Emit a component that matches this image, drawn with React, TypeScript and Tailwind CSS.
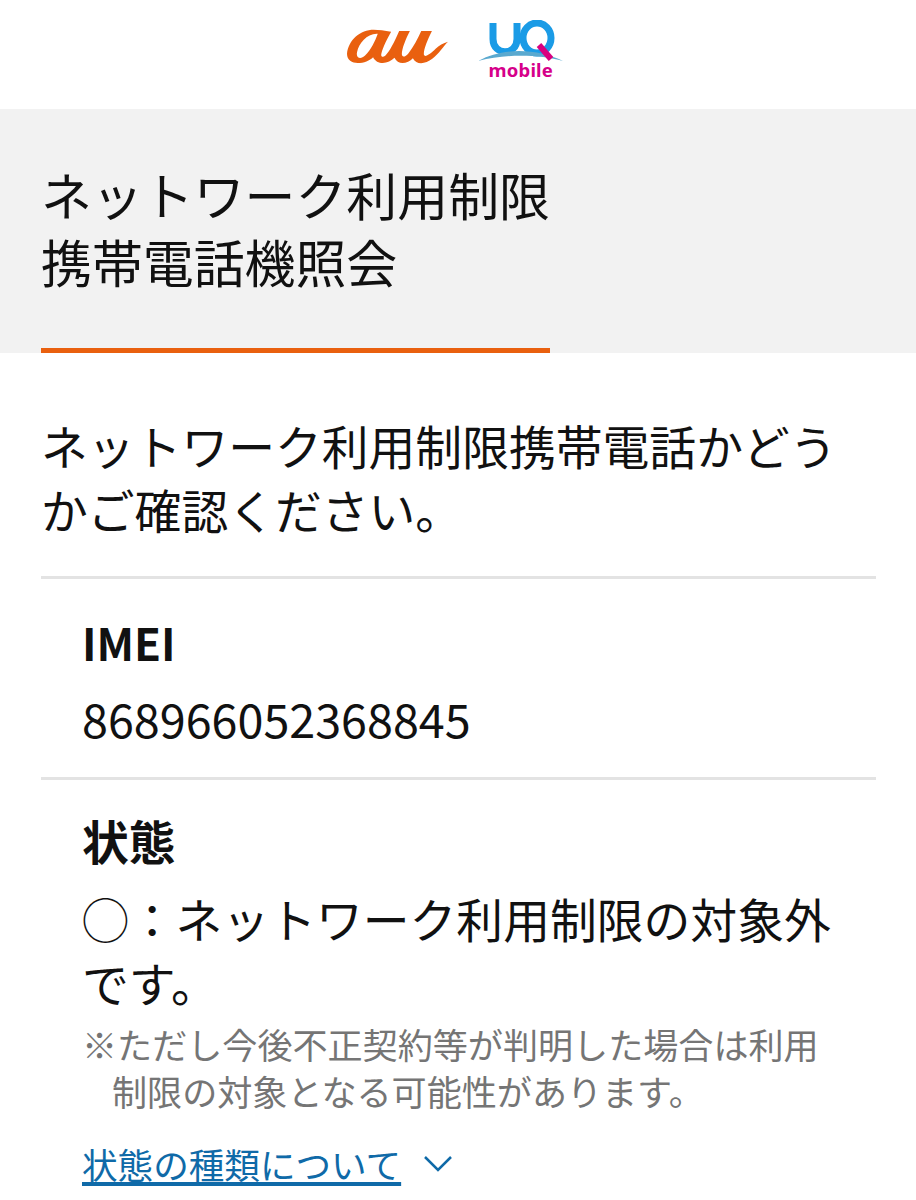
export default function App() {
  return (
    <div className="w-[916px] h-[1200px] overflow-hidden bg-white text-[#111111] font-['Noto_Sans_CJK_JP',sans-serif]">
      <header className="h-[109px] flex items-start justify-center gap-[30px] pt-[20px] pr-[5px]">
        <svg width="102" height="37" viewBox="80 86 305 110" className="mt-[9px]">
          <path
            fillRule="evenodd"
            fill="#e9600f"
            d="M80 160C84 118 120 88 160 88C175 88 192 90 212 94C200 115 188 140 183 158C180 170 187 172 195 165C206 155 222 125 236 92L268 92C256 115 244 145 244 160C244 172 254 170 264 158C278 140 292 115 302 92L334 92C320 120 308 150 310 163C313 172 330 160 345 145C355 135 368 128 382 124C370 135 355 160 335 175C315 190 288 195 277 173C262 190 232 195 222 172C205 190 170 195 158 170C140 190 80 200 80 160ZM172 100C140 98 116 128 110 155C106 174 122 177 134 165C152 148 164 122 172 100Z"
          />
        </svg>
        <div className="relative w-[86px] h-[62px]">
          <svg width="86" height="62" viewBox="0 0 86 62" fill="none">
            <path d="M14 3V19C14 36 38 36 38 19V3" stroke="#1a9be6" strokeWidth="7" />
            <ellipse cx="58" cy="18" rx="14" ry="15" stroke="#1a9be6" strokeWidth="7" />
            <path d="M-1 41C10 35 24 31 40 31C56 31 72 35 84 41C60 34 24 34 -1 41Z" fill="#5aa9cf" />
            <path d="M60 25L72 39" stroke="#d9007f" strokeWidth="6" />
          </svg>
          <span className="absolute left-[10px] top-[38px] text-[18.5px] leading-[24px] font-bold tracking-[0.2px] text-[#d6008a] font-['Noto_Sans',sans-serif]">mobile</span>
        </div>
      </header>
      <section className="h-[244px] bg-[#f2f2f2] pl-[41px]">
        <div className="w-[509px] h-[244px] border-b-[5px] border-[#e9600f] pt-[52px]">
          <h1 className="text-[50.9px] leading-[67px] font-normal whitespace-nowrap">ネットワーク利用制限<br />携帯電話機照会</h1>
        </div>
      </section>
      <main className="px-[41px] pt-[60px]">
        <p className="text-[46.8px] leading-[64px] w-[800px]">ネットワーク利用制限携帯電話かどうかご確認ください。</p>
        <div className="mt-[35px] border-t-[3px] border-[#e3e3e3] w-[835px] pl-[41px] pt-[31px] pb-[27px]">
          <h2 className="text-[44px] leading-[64px] font-bold">IMEI</h2>
          <p className="text-[46.7px] leading-[64px] mt-[12px]">868966052368845</p>
        </div>
        <div className="border-t-[3px] border-[#e3e3e3] w-[835px] pl-[41px] pt-[28px]">
          <h2 className="text-[46.8px] leading-[64px] font-bold">状態</h2>
          <p className="text-[46.8px] leading-[64px] mt-[14px] w-[760px]">◯：ネットワーク利用制限の対象外です。</p>
          <p className="text-[35.1px] leading-[47px] text-[#757575] mt-[6px] pl-[30px] -indent-[30px] w-[760px]">※ただし今後不正契約等が判明した場合は利用制限の対象となる可能性があります。</p>
          <div className="flex items-center gap-[22px] mt-[25px]">
            <span className="text-[35.6px] leading-[50px] text-[#0f6aa8] underline decoration-[4px] underline-offset-[3px]">状態の種類について</span>
            <svg width="30" height="18" viewBox="0 0 30 18" fill="none" stroke="#0f6aa8" strokeWidth="2.5"><path d="M2 2L15 15L28 2" /></svg>
          </div>
        </div>
      </main>
    </div>
  );
}
